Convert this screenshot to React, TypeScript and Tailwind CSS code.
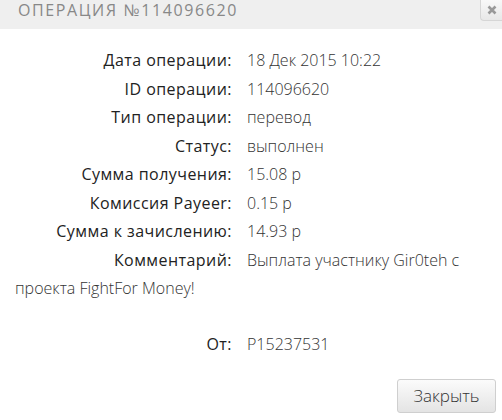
import React from "react";

const rows: [string, string][] = [
  ["Дата операции:", "18 Дек 2015 10:22"],
  ["ID операции:", "114096620"],
  ["Тип операции:", "перевод"],
  ["Статус:", "выполнен"],
  ["Сумма получения:", "15.08 р"],
  ["Комиссия Payeer:", "0.15 р"],
  ["Сумма к зачислению:", "14.93 р"],
];

function Row({ label, value }: { label: string; value: string }) {
  return (
    <div className="pl-[15px] pr-[10px] leading-[28.5px] font-light flow-root">
      <span className="float-left h-[28.5px] w-[217px] mr-[15px] text-right text-[#222] font-normal tracking-[0.45px]">{label}</span>
      <span className="text-[#333]">{value}</span>
    </div>
  );
}

export default function App() {
  return (
    <div
      className="w-[502px] h-[420px] bg-white relative overflow-hidden"
      style={{ fontFamily: '"Open Sans", "Noto Sans", sans-serif' }}
    >
      <div className="h-[29px] bg-[#efefef] pl-[18px]">
        <div className="text-[16px] tracking-[1.6px] text-[#888] leading-[20px]">
          ОПЕРАЦИЯ №114096620
        </div>
      </div>
      <button className="absolute right-0 top-0 w-[22px] h-[21px] rounded-bl-[4px] border border-t-0 border-r-0 border-[#d6d6d6] bg-gradient-to-b from-[#f8f8f8] to-[#e8e8e8] flex items-center justify-center">
        <svg width="10" height="10" viewBox="0 0 10 10">
          <path d="M1.5 1.5 L8.5 8.5 M8.5 1.5 L1.5 8.5" stroke="#999" strokeWidth="2.6" strokeLinecap="butt" />
        </svg>
      </button>
      <div className="pt-[17px] text-[16px]">
        {rows.map(([l, v]) => (
          <Row key={l} label={l} value={v} />
        ))}
        <Row label="Комментарий:" value="Выплата участнику Gir0teh с проекта FightFor Money!" />
        <div className="h-[27px]" />
        <Row label="От:" value="P15237531" />
      </div>
      <div className="absolute right-[6px] bottom-[7px]">
        <button className="w-[99px] h-[34px] rounded-[3px] border border-[#cfcfcf] bg-gradient-to-b from-[#fbfbfb] to-[#e4e4e4] text-[17px] text-[#333] font-light">
          Закрыть
        </button>
      </div>
    </div>
  );
}
